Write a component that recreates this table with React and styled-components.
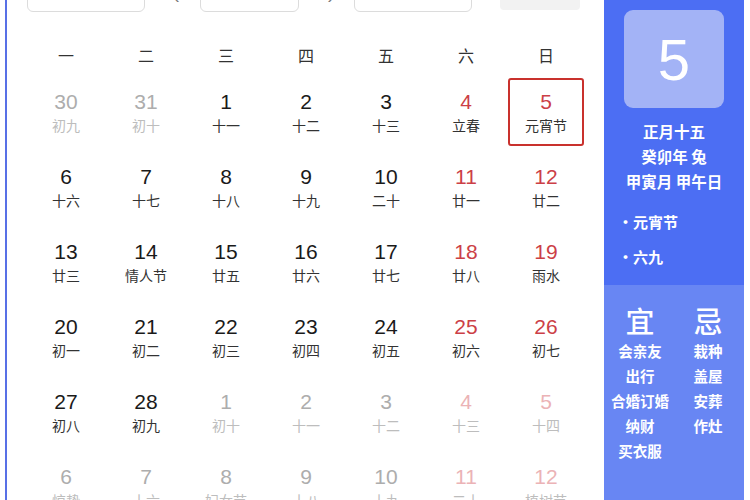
import React from "react";
import styled, { createGlobalStyle } from "styled-components";

const GlobalStyle = createGlobalStyle`
  html, body {
    margin: 0;
    padding: 0;
    background: #fff;
    overflow: hidden;
  }
  body {
    font-family: "Liberation Sans", "Noto Sans CJK SC", sans-serif;
  }
`;

const WEEK = ["一", "二", "三", "四", "五", "六", "日"];

// [day, lunar, faded, selected]
const ROWS = [
  [["30", "初九", 1], ["31", "初十", 1], ["1", "十一"], ["2", "十二"], ["3", "十三"], ["4", "立春"], ["5", "元宵节", 0, 1]],
  [["6", "十六"], ["7", "十七"], ["8", "十八"], ["9", "十九"], ["10", "二十"], ["11", "廿一"], ["12", "廿二"]],
  [["13", "廿三"], ["14", "情人节"], ["15", "廿五"], ["16", "廿六"], ["17", "廿七"], ["18", "廿八"], ["19", "雨水"]],
  [["20", "初一"], ["21", "初二"], ["22", "初三"], ["23", "初四"], ["24", "初五"], ["25", "初六"], ["26", "初七"]],
  [["27", "初八"], ["28", "初九"], ["1", "初十", 1], ["2", "十一", 1], ["3", "十二", 1], ["4", "十三", 1], ["5", "十四", 1]],
  [["6", "惊蛰", 1], ["7", "十六", 1], ["8", "妇女节", 1], ["9", "十八", 1], ["10", "十九", 1], ["11", "二十", 1], ["12", "植树节", 1]],
];

const YI = ["会亲友", "出行", "合婚订婚", "纳财", "买衣服"];
const JI = ["栽种", "盖屋", "安葬", "作灶"];

export default function App() {
  return (
    <>
      <GlobalStyle />
      <Card>
        <Main>
          <Toolbar>
            <Select $w={118} />
            <Arrow>‹</Arrow>
            <Select $w={99} />
            <Arrow>›</Arrow>
            <Select $w={118} />
            <TodayButton />
          </Toolbar>
          <WeekRow>
            {WEEK.map((w) => (
              <WeekDay key={w}>{w}</WeekDay>
            ))}
          </WeekRow>
          <Grid>
            {ROWS.map((row, r) =>
              row.map(([day, lunar, faded, selected], c) => (
                <Cell key={r + "-" + c} $selected={!!selected}>
                  <DayNum $weekend={c >= 5} $faded={!!faded}>
                    {day}
                  </DayNum>
                  <Lunar $faded={!!faded}>{lunar}</Lunar>
                </Cell>
              ))
            )}
          </Grid>
        </Main>
        <Side>
          <SideTop>
            <BigDay>5</BigDay>
            <InfoLine>正月十五</InfoLine>
            <InfoLine>癸卯年 兔</InfoLine>
            <InfoLine>甲寅月 甲午日</InfoLine>
            <FestivalList>
              <Festival>·元宵节</Festival>
              <Festival>·六九</Festival>
            </FestivalList>
          </SideTop>
          <SideBottom>
            <YiJiCol>
              <YiJiTitle>宜</YiJiTitle>
              {YI.map((t) => (
                <YiJiItem key={t}>{t}</YiJiItem>
              ))}
            </YiJiCol>
            <YiJiCol>
              <YiJiTitle>忌</YiJiTitle>
              {JI.map((t) => (
                <YiJiItem key={t}>{t}</YiJiItem>
              ))}
            </YiJiCol>
          </SideBottom>
        </Side>
      </Card>
    </>
  );
}

const Card = styled.div`
  display: flex;
  width: 739px;
  margin: -24px 0 0 5px;
  border-left: 2px solid #5870e6;
  background: #fff;
`;

const Main = styled.div`
  width: 597px;
  padding-left: 21px;
  box-sizing: border-box;
`;

const Toolbar = styled.div`
  display: flex;
  align-items: center;
  height: 30px;
  padding-top: 6px;
  margin-left: -1px;
`;

const Select = styled.div`
  width: ${(p) => p.$w}px;
  height: 30px;
  box-sizing: border-box;
  border: 1px solid #dcdcdc;
  border-radius: 6px;
  background: #fff;
  flex-shrink: 0;
`;

const Arrow = styled.div`
  width: 55px;
  text-align: center;
  color: #777;
  font-size: 18px;
  line-height: 30px;
  padding-left: 8px;
  box-sizing: border-box;
`;

const TodayButton = styled.div`
  width: 80px;
  height: 28px;
  margin-left: 28px;
  border-radius: 4px;
  background: #f2f2f2;
  margin-top: -2px;
`;

const WeekRow = styled.div`
  display: grid;
  grid-template-columns: repeat(7, 76px);
  column-gap: 4px;
  margin-top: 31px;
`;

const WeekDay = styled.div`
  text-align: center;
  font-family: "Noto Sans CJK SC", sans-serif;
  font-size: 16px;
  line-height: 24px;
  color: #333;
`;

const Grid = styled.div`
  display: grid;
  grid-template-columns: repeat(7, 76px);
  grid-auto-rows: 68px;
  column-gap: 4px;
  row-gap: 7px;
  margin-top: 11px;
`;

const Cell = styled.div`
  box-sizing: border-box;
  display: flex;
  flex-direction: column;
  align-items: center;
  padding-top: ${(p) => (p.$selected ? 10 : 12)}px;
  border: ${(p) => (p.$selected ? "2px solid #c9312d" : "none")};
  border-radius: 3px;
`;

const DayNum = styled.div`
  font-family: "Liberation Sans", sans-serif;
  font-size: 21px;
  line-height: 24px;
  color: ${(p) =>
    p.$weekend
      ? p.$faded
        ? "#ebb3b6"
        : "#cc3f47"
      : p.$faded
      ? "#adadad"
      : "#1a1a1a"};
`;

const Lunar = styled.div`
  margin-top: 2px;
  font-family: "Noto Sans CJK SC", sans-serif;
  font-size: 14px;
  line-height: 18px;
  color: ${(p) => (p.$faded ? "#bdbdbd" : "#333")};
`;

const Side = styled.div`
  width: 140px;
  display: flex;
  flex-direction: column;
  color: #fff;
  font-family: "Noto Sans CJK SC", sans-serif;
`;

const SideTop = styled.div`
  background: #4c6ef3;
  height: 309px;
  padding-top: 34px;
  box-sizing: border-box;
  display: flex;
  flex-direction: column;
  align-items: center;
`;

const BigDay = styled.div`
  width: 100px;
  height: 98px;
  border-radius: 9px;
  background: #a3b3f6;
  display: flex;
  align-items: center;
  justify-content: center;
  font-family: "Liberation Sans", sans-serif;
  font-size: 58px;
  margin-bottom: 11px;
`;

const InfoLine = styled.div`
  font-size: 15.5px;
  font-weight: 700;
  line-height: 25px;
  white-space: nowrap;
`;

const FestivalList = styled.div`
  align-self: stretch;
  margin-top: 10px;
  padding-left: 14px;
`;

const Festival = styled.div`
  font-size: 15px;
  font-weight: 700;
  line-height: 35px;
`;

const SideBottom = styled.div`
  flex: 1;
  min-height: 240px;
  background: #6886f3;
  padding-top: 19px;
  display: grid;
  grid-template-columns: 72px 64px;
  align-items: start;
`;

const YiJiCol = styled.div`
  display: flex;
  flex-direction: column;
  align-items: center;
`;

const YiJiTitle = styled.div`
  font-size: 29px;
  line-height: 32px;
  font-weight: 500;
  margin-bottom: 2px;
`;

const YiJiItem = styled.div`
  font-size: 14.5px;
  font-weight: 700;
  line-height: 25px;
  white-space: nowrap;
`;
